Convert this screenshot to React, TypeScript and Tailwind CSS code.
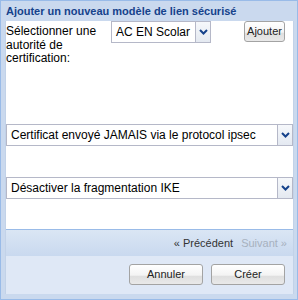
import React from 'react';

function Chevron() {
  return (
    <svg width="9" height="6" viewBox="0 0 9 6" className="block">
      <polyline
        points="1,1 4.5,4.5 8,1"
        fill="none"
        stroke="#15428b"
        strokeWidth="2"
      />
    </svg>
  );
}

interface ComboProps {
  value: string;
  className?: string;
}

function Combo({ value, className = '' }: ComboProps) {
  return (
    <div
      className={`flex h-[22px] border border-[#b5b8c8] bg-white ${className}`}
    >
      <div className="flex flex-1 items-center overflow-hidden whitespace-nowrap pl-[4px] text-[12px] text-black">
        {value}
      </div>
      <div className="flex w-[15px] items-center justify-center border-l border-[#b5b8c8] bg-[linear-gradient(#f6f8fb,#e4e9f1)]">
        <Chevron />
      </div>
    </div>
  );
}

function Btn({ label, className = '' }: { label: string; className?: string }) {
  return (
    <button
      className={`flex h-[21px] items-center justify-center rounded-[3px] border border-[#a3a3a3] bg-[linear-gradient(#ffffff_0%,#f3f3f3_55%,#dedede_56%,#e9e9e9_100%)] text-[11px] text-[#222] ${className}`}
    >
      {label}
    </button>
  );
}

export default function App() {
  return (
    <div className="flex h-[300px] w-[298px] flex-col border border-[#99bbe8] bg-[#cad9ee] pb-[5px] pl-[4px] pr-[3px] font-['Liberation_Sans',Arial,sans-serif]">
      <div className="flex h-[20px] items-center pl-[1px] text-[11px] font-bold text-[#15428b]">
        Ajouter un nouveau modèle de lien sécurisé
      </div>

      <div className="flex flex-1 flex-col border-x border-[#c2d2e8]">
        <div className="flex h-[208px] flex-col bg-white">
          <div className="flex items-start">
            <div className="mt-[4px] w-[105px] text-[12px] leading-[13.5px] text-black">
              Sélectionner une autorité de certification:
            </div>
            <Combo value="AC EN Scolar" className="w-[100px]" />
            <Btn label="Ajouter" className="ml-auto mr-[8px] w-[41px]" />
          </div>

          <Combo
            value="Certificat envoyé JAMAIS via le protocol ipsec"
            className="mt-[58px] w-full"
          />
          <Combo
            value="Désactiver la fragmentation IKE"
            className="mt-[31px] w-full"
          />
        </div>

        <div className="flex h-[27px] items-center justify-end gap-[8px] border-t border-[#99bbe8] bg-[linear-gradient(#dae6f4,#c9d9ef)] pr-[6px] text-[11px]">
          <span className="text-[#333]">« Précédent</span>
          <span className="text-[#a7b1be]">Suivant »</span>
        </div>

        <div className="flex flex-1 justify-end gap-[8px] bg-[#dfe8f6] pr-[8px] pt-[8px]">
          <Btn label="Annuler" className="w-[74px]" />
          <Btn label="Créer" className="w-[74px]" />
        </div>
      </div>
    </div>
  );
}
